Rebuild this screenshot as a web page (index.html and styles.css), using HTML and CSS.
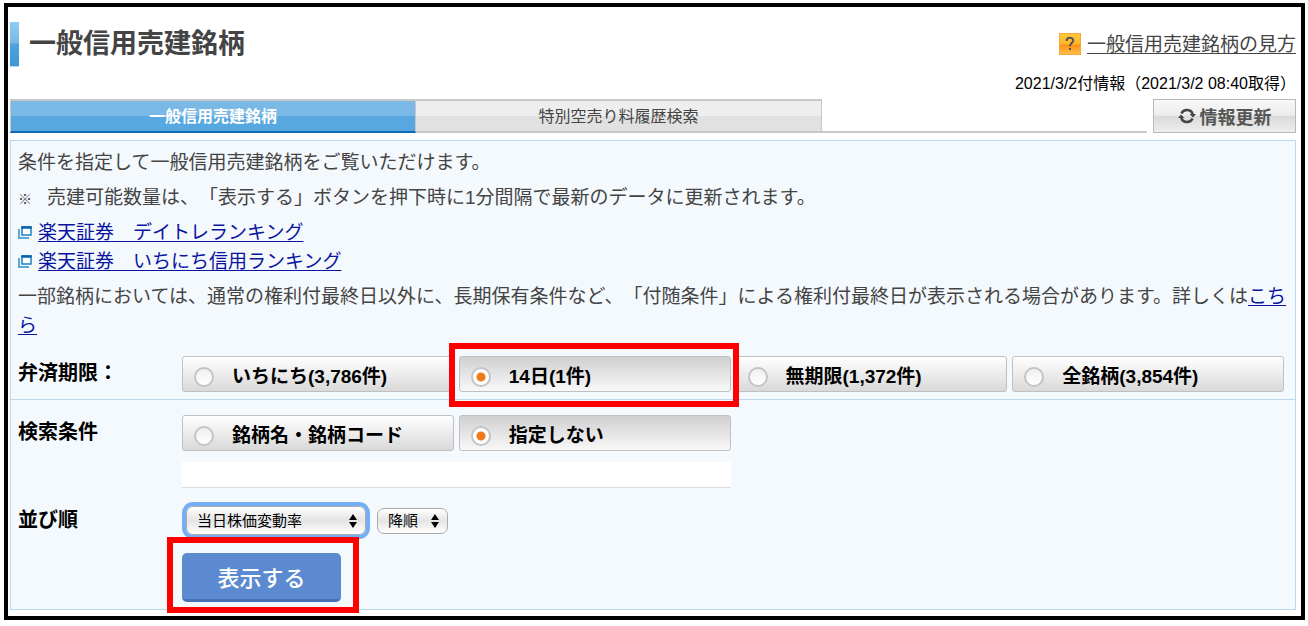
FILE: index.html
```html
<!DOCTYPE html>
<html lang="ja">
<head>
    <meta charset="UTF-8">
    <meta name="viewport" content="width=device-width, initial-scale=1.0">
    <title>一般信用売建銘柄</title>
    <link rel="stylesheet" href="styles.css">
</head>
<body>
    <main class="frame">
        <header class="page-header">
            <h1>一般信用売建銘柄</h1>
            <a class="help-link" href="#">
                <svg class="help-icon" viewBox="0 0 22 22" aria-hidden="true">
                    <defs>
                        <linearGradient id="help-bg" x1="0" y1="0" x2="0" y2="1">
                            <stop offset="0" stop-color="#ffc93c"/>
                            <stop offset="0.5" stop-color="#ffb52a"/>
                            <stop offset="0.55" stop-color="#ff8f17"/>
                            <stop offset="1" stop-color="#ffc24a"/>
                        </linearGradient>
                    </defs>
                    <rect x="0.5" y="0.5" width="21" height="21" fill="url(#help-bg)" stroke="#f5a83c"/>
                    <path d="M7.600 8C7.600 3.600 14.400 3.800 14.200 7.600C14 10 11 10.200 11 13.200" fill="none" stroke="#555" stroke-width="2"/>
                    <rect x="10" y="15" width="2" height="2" fill="#555"/>
                </svg>
                <span>一般信用売建銘柄の見方</span>
            </a>
        </header>

        <p class="updated">2021/3/2付情報（2021/3/2 08:40取得）</p>

        <div class="tab-row">
            <nav class="tabs">
                <a class="tab active" href="#">一般信用売建銘柄</a>
                <a class="tab" href="#">特別空売り料履歴検索</a>
            </nav>
            <button type="button" class="refresh">
                <svg viewBox="0 0 18 18" aria-hidden="true">
                    <path d="M3.400 6.500A6.200 6.200 0 0 1 14.800 7M14.600 11.500A6.200 6.200 0 0 1 3.200 11" fill="none" stroke="#444" stroke-width="2.400"/>
                    <path d="M11.500 7H18L15 10.500Z" fill="#444"/>
                    <path d="M6.500 11H0L3 7.500Z" fill="#444"/>
                </svg>
                情報更新
            </button>
        </div>

        <form class="panel">
            <!-- Description -->
            <div class="description">
                <p>条件を指定して一般信用売建銘柄をご覧いただけます。</p>
                <p><span class="mark">※</span>　売建可能数量は、「表示する」ボタンを押下時に1分間隔で最新のデータに更新されます。</p>
                <ul class="links">
                    <li>
                        <svg class="window-icon" viewBox="0 0 14 13" aria-hidden="true">
                            <path d="M1 3V12H11" fill="none" stroke="#5aa9d6" stroke-width="2"/>
                            <rect x="4" y="1" width="9" height="8" fill="#fff" stroke="#1e7fc0" stroke-width="1.500"/>
                            <path d="M3.300 1.500H13.700" stroke="#0d62ad" stroke-width="2.500"/>
                        </svg>
                        <a href="#">楽天証券　デイトレランキング</a>
                    </li>
                    <li>
                        <svg class="window-icon" viewBox="0 0 14 13" aria-hidden="true">
                            <path d="M1 3V12H11" fill="none" stroke="#5aa9d6" stroke-width="2"/>
                            <rect x="4" y="1" width="9" height="8" fill="#fff" stroke="#1e7fc0" stroke-width="1.500"/>
                            <path d="M3.300 1.500H13.700" stroke="#0d62ad" stroke-width="2.500"/>
                        </svg>
                        <a href="#">楽天証券　いちにち信用ランキング</a>
                    </li>
                </ul>
                <p>一部銘柄においては、通常の権利付最終日以外に、長期保有条件など、「付随条件」による権利付最終日が表示される場合があります。詳しくは<a href="#">こちら</a></p>
            </div>

            <!-- Repayment term -->
            <div class="row row-term" role="radiogroup" aria-labelledby="term-label">
                <span class="row-label" id="term-label">弁済期限：</span>
                <div class="options">
                    <label class="option"><input type="radio" name="term">いちにち(3,786件)</label>
                    <label class="option marked"><input type="radio" name="term" checked>14日(1件)</label>
                    <label class="option"><input type="radio" name="term">無期限(1,372件)</label>
                    <label class="option"><input type="radio" name="term">全銘柄(3,854件)</label>
                </div>
            </div>

            <!-- Search condition -->
            <div class="row" role="radiogroup" aria-labelledby="search-label">
                <span class="row-label" id="search-label">検索条件</span>
                <div class="options">
                    <label class="option"><input type="radio" name="search">銘柄名・銘柄コード</label>
                    <label class="option"><input type="radio" name="search" checked>指定しない</label>
                    <input class="keyword" type="text" aria-labelledby="search-label">
                </div>
            </div>

            <!-- Sort order -->
            <div class="row">
                <label class="row-label" for="sort-key">並び順</label>
                <div class="sort">
                    <div class="selects">
                        <div class="select-box focused">
                            <select id="sort-key">
                                <option>当日株価変動率</option>
                            </select>
                            <svg viewBox="0 0 8 14" aria-hidden="true"><path d="M4 0L8 6H0ZM4 14L0 8H8Z"/></svg>
                        </div>
                        <div class="select-box">
                            <select aria-label="昇順・降順">
                                <option>降順</option>
                            </select>
                            <svg viewBox="0 0 8 14" aria-hidden="true"><path d="M4 0L8 6H0ZM4 14L0 8H8Z"/></svg>
                        </div>
                    </div>
                    <button type="button" class="submit marked">表示する</button>
                </div>
            </div>
        </form>
    </main>
</body>
</html>
```
FILE: styles.css
```css
* {
    box-sizing: border-box;
}

body {
    margin: 0;
    padding: 3px 3px 6px 4px;
    background: #fff;
    color: #444;
    font-family: "Liberation Sans", "Noto Sans CJK JP", sans-serif;
    font-size: 19px;
    line-height: 29px;
    text-spacing-trim: space-all;
}

h1, p, ul {
    margin: 0;
    padding: 0;
}

button, input, select {
    font-family: inherit;
}

.frame {
    border: 4px solid #000;
    padding: 15px 5px 6px 2px;
}

/* Header */
.page-header {
    display: flex;
    justify-content: space-between;
    height: 44px;
}

h1 {
    display: flex;
    align-items: center;
    gap: 10px;
    font-size: 27px;
    line-height: 44px;
}

h1::before {
    content: "";
    width: 9px;
    height: 44px;
    background: linear-gradient(#8fcbf5, #78b8e6 48%, #4ea4e0 50%, #3f96d6);
    border-bottom: 1px solid #b5dcf7;
}

.help-link {
    display: flex;
    align-items: center;
    gap: 6px;
    color: #444;
    text-decoration: none;
}

.help-link span {
    text-decoration: underline;
    text-decoration-thickness: 1px;
    text-underline-offset: 2px;
}

.help-icon {
    width: 22px;
    height: 22px;
}

.updated {
    padding: 6px 0 3px;
    color: #000;
    font-size: 16px;
    line-height: 24px;
    text-align: right;
}

/* Tabs */
.tab-row {
    display: flex;
    gap: 6px;
    height: 34px;
}

.tabs {
    flex: 1;
    display: flex;
    border-bottom: 2px solid #c8c8c8;
}

.tab {
    width: 406px;
    height: 34px;
    border: solid #c8c8c8;
    border-width: 2px 1px 2px 0;
    background: linear-gradient(#eee 50%, #e1e1e1 50%);
    color: #444;
    font-size: 16px;
    line-height: 32px;
    text-align: center;
    text-decoration: none;
}

.tab.active {
    border-left-width: 1px;
    border-bottom-color: #0f69b5;
    background: linear-gradient(#7ab8e6 50%, #57a7e1 50%);
    color: #fff;
    font-weight: bold;
}

.refresh {
    display: flex;
    align-items: center;
    justify-content: center;
    gap: 4px;
    width: 143px;
    padding: 0;
    border: 1px solid #b8b8b8;
    background: linear-gradient(#f8f8f8, #ececec 48%, #dadada 52%, #eee);
    color: #555;
    font-size: 18px;
    font-weight: bold;
}

.refresh svg {
    width: 18px;
    height: 18px;
}

/* Search panel */
.panel {
    margin-top: 7px;
    padding-bottom: 7px;
    border: 1px solid #b9d9ec;
    background: #f4f9fd;
}

.description {
    display: flex;
    flex-direction: column;
    gap: 6px;
    padding: 7px 4px 1px 7px;
}

.description a {
    color: #0a14a0;
    text-decoration-thickness: 1px;
    text-underline-offset: 2px;
}

.mark {
    margin-right: -4px;
    font-size: 14px;
    font-weight: bold;
    line-height: 1;
}

.links {
    list-style: none;
}

.links li {
    display: flex;
    align-items: center;
    gap: 6px;
    height: 29px;
}

.window-icon {
    width: 14px;
    height: 13px;
}

/* Form rows */
.row {
    display: flex;
    padding: 15px 11px 0 7px;
}

.row-term {
    padding-bottom: 7px;
    border-bottom: 1px solid #b9d9ec;
}

.row-label {
    flex: 0 0 164px;
    color: #000;
    font-size: 20px;
    font-weight: bold;
    line-height: 35px;
}

.options {
    flex: 1;
    display: grid;
    grid-template-columns: repeat(4, 1fr);
    gap: 11px 5px;
}

.option {
    display: flex;
    align-items: center;
    gap: 18px;
    height: 36px;
    padding: 5px 0 0 11px;
    border: 1px solid #c0c0c0;
    border-radius: 3px;
    background: linear-gradient(#fff, #d9d9d9);
    color: #000;
    font-weight: bold;
}

.option:has(input:checked) {
    background: linear-gradient(#d0d0d0, #f8f8f8);
}

.option input {
    appearance: none;
    width: 20px;
    height: 20px;
    margin: 0;
    border: 2px solid #c4c4c4;
    border-radius: 50%;
    background: linear-gradient(#f0f0f0, #fff);
}

.option input:checked {
    background: radial-gradient(circle, #ee7a1a 4px, #fff 5px);
}

.keyword {
    grid-column: 1 / span 2;
    height: 26px;
    border: 0;
    border-bottom: 1px solid #ddd;
    background: #fff;
    font-size: 16px;
}

/* Sort order and submit */
.sort {
    display: flex;
    flex-direction: column;
    align-items: flex-start;
    gap: 15px;
}

.selects {
    display: flex;
    align-items: center;
    gap: 11px;
    height: 35px;
    padding-left: 4px;
}

.select-box {
    position: relative;
}

.select-box select {
    appearance: none;
    display: block;
    width: 71px;
    height: 26px;
    padding: 0 0 0 10px;
    border: 1px solid #aaa;
    border-radius: 7px;
    background: linear-gradient(#fff, #e4e4e4 50%, #fff);
    color: #000;
    font-size: 15px;
}

.select-box.focused select {
    width: 180px;
    height: 29px;
    outline: 4px solid #74aff5;
    outline-offset: 0;
}

.select-box svg {
    position: absolute;
    top: 50%;
    right: 9px;
    width: 8px;
    height: 14px;
    margin-top: -7px;
    pointer-events: none;
}

.submit {
    width: 159px;
    height: 49px;
    border: 0;
    border-bottom: 3px solid #4a6fb3;
    border-radius: 5px;
    background: #5c8ad0;
    color: #fff;
    font-size: 22px;
    font-weight: 500;
}

/* Red outlines over the controls to press */
.marked {
    position: relative;
}

.marked::after {
    content: "";
    position: absolute;
    inset: -14px -9px -16px -11px;
    z-index: 1;
    border: 6px solid #f00;
    pointer-events: none;
}

.submit.marked::after {
    inset: -16px -18px -14px -15px;
}
```
